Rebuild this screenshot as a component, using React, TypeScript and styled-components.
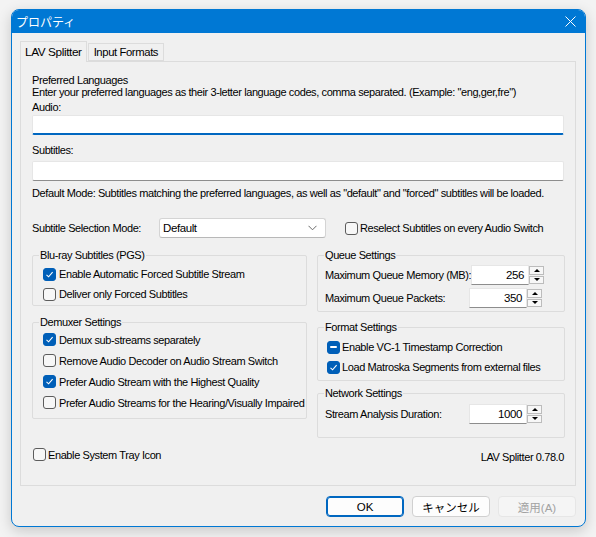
import React from "react";
import styled, { createGlobalStyle } from "styled-components";

const GlobalStyle = createGlobalStyle`
  html, body {
    margin: 0;
    padding: 0;
    background: #f3f3f3;
  }
  body {
    font-family: "Liberation Sans", "Noto Sans CJK JP", sans-serif;
    font-size: 11px;
    letter-spacing: -0.4px;
    color: #000;
  }
`;

const Page = styled.div`
  width: 596px;
  height: 537px;
  padding: 9px 0 0 11px;
  box-sizing: border-box;
`;

const Window = styled.div`
  width: 575px;
  height: 518px;
  box-sizing: border-box;
  border: 1px solid #0078d4;
  border-radius: 8px;
  overflow: hidden;
  background: #f0f0f0;
  box-shadow: 0 4px 14px rgba(0, 0, 0, 0.18);
  display: flex;
  flex-direction: column;
`;

const TitleBar = styled.div`
  height: 23px;
  background: #0078d4;
  color: #fff;
  display: flex;
  align-items: center;
  justify-content: space-between;
  padding: 0 9px 0 4px;
  font-size: 12px;
  letter-spacing: 0;
`;

const Body = styled.div`
  padding: 8px 9px 0 8px;
  display: flex;
  flex-direction: column;
`;

const TabStrip = styled.div`
  display: flex;
  align-items: flex-end;
  height: 20px;
  position: relative;
  z-index: 1;
`;

const Tab = styled.div<{ $active?: boolean }>`
  box-sizing: border-box;
  height: ${(p) => (p.$active ? "21px" : "18px")};
  padding: 0 ${(p) => (p.$active ? "4px" : "5px")};
  display: flex;
  align-items: center;
  border: 1px solid #dcdcdc;
  border-bottom: ${(p) => (p.$active ? "none" : "1px solid #dcdcdc")};
  background: #f0f0f0;
  margin-bottom: ${(p) => (p.$active ? "-1px" : "0")};
  margin-left: ${(p) => (p.$active ? "0" : "1px")};
  font-size: ${(p) => (p.$active ? "11.8px" : "11.3px")};
`;

const Panel = styled.div`
  box-sizing: border-box;
  height: 425px;
  border: 1px solid #dcdcdc;
  padding: 12px 11px 0;
  display: flex;
  flex-direction: column;
`;

const Line = styled.div<{ $mt?: number }>`
  line-height: 12px;
  margin-top: ${(p) => p.$mt ?? 0}px;
  white-space: nowrap;
`;

const TextInput = styled.div<{ $focused?: boolean; $mt?: number }>`
  height: 20px;
  box-sizing: border-box;
  background: #fff;
  border: 1px solid #e6e6e6;
  border-bottom: ${(p) => (p.$focused ? "2px solid #0067c0" : "1px solid #8d8d8d")};
  border-radius: 2px;
  margin-top: ${(p) => p.$mt ?? 0}px;
`;

const ModeRow = styled.div`
  display: flex;
  align-items: center;
  margin-top: 19px;
  height: 20px;
`;

const ModeLabel = styled.span`
  width: 127px;
`;

const Combo = styled.div`
  width: 167px;
  height: 20px;
  box-sizing: border-box;
  background: #fff;
  border: 1px solid #d4d4d4;
  border-bottom-color: #b8b8b8;
  border-radius: 3px;
  display: flex;
  align-items: center;
  justify-content: space-between;
  padding: 0 8px 0 3px;
  font-size: 11.5px;
`;

const Columns = styled.div`
  display: flex;
  gap: 10px;
  margin-top: 11px;
  align-items: flex-start;
`;

const Column = styled.div<{ $w: number }>`
  width: ${(p) => p.$w}px;
  display: flex;
  flex-direction: column;
`;

const Group = styled.fieldset<{ $mt?: number; $pt?: number; $pb?: number; $pl?: number }>`
  margin: ${(p) => p.$mt ?? 0}px 0 0;
  padding: ${(p) => p.$pt ?? 3}px 8px ${(p) => p.$pb ?? 2}px ${(p) => p.$pl ?? 10}px;
  border: 1px solid #dcdcdc;
  border-radius: 2px;
  min-width: 0;
  display: flex;
  flex-direction: column;
`;

const Legend = styled.legend<{ $pl?: number }>`
  padding: 0 1px;
  margin-left: ${(p) => 6 - (p.$pl ?? 10)}px;
  line-height: 12px;
`;

const CheckRow = styled.label<{ $h?: number; $gap?: number }>`
  display: flex;
  align-items: center;
  height: ${(p) => p.$h ?? 20}px;
  gap: ${(p) => p.$gap ?? 3}px;
  white-space: nowrap;
`;

const Box = styled.span<{ $state: "on" | "off" | "mixed" }>`
  width: 13px;
  height: 13px;
  box-sizing: border-box;
  border-radius: 3px;
  flex: none;
  display: flex;
  align-items: center;
  justify-content: center;
  border: 1px solid ${(p) => (p.$state === "off" ? "#5c5c5c" : "#005fb8")};
  background: ${(p) => (p.$state === "off" ? "#f7f7f7" : "#005fb8")};
`;

const Dash = styled.span`
  width: 7px;
  height: 2px;
  background: #fff;
  border-radius: 1px;
`;

const SpinRow = styled.div<{ $mt?: number }>`
  display: flex;
  align-items: center;
  justify-content: space-between;
  height: 20px;
  margin-top: ${(p) => p.$mt ?? 0}px;
  padding-right: 14px;
  white-space: nowrap;
`;

const SpinBox = styled.div`
  display: flex;
  height: 20px;
`;

const SpinEdit = styled.div`
  width: 58px;
  box-sizing: border-box;
  background: #fff;
  border: 1px solid #e6e6e6;
  border-bottom-color: #8d8d8d;
  text-align: right;
  padding-right: 4px;
  line-height: 18px;
  font-size: 11.5px;
`;

const SpinButtons = styled.div`
  width: 15px;
  display: flex;
  flex-direction: column;
  gap: 1px;
  padding: 1px 0;
  box-sizing: border-box;
`;

const SpinButton = styled.div`
  flex: 1;
  border: 1px solid #bcbcbc;
  background: #f7f7f7;
  display: flex;
  align-items: center;
  justify-content: center;
`;

const Arrow = styled.span<{ $up?: boolean }>`
  width: 0;
  height: 0;
  border-left: 3px solid transparent;
  border-right: 3px solid transparent;
  ${(p) => (p.$up ? "border-bottom: 3px solid #000;" : "border-top: 3px solid #000;")}
`;

const BottomRow = styled.div`
  display: flex;
  justify-content: space-between;
  align-items: center;
  margin-top: 8px;
  padding-left: 1px;
`;

const Version = styled.span`
  margin-top: 5px;
`;

const Buttons = styled.div`
  display: flex;
  justify-content: flex-end;
  gap: 8px;
  margin-top: 10px;
`;

const Button = styled.div<{ $kind?: "default" | "normal" | "disabled" }>`
  width: 78px;
  height: 21px;
  box-sizing: border-box;
  border-radius: 4px;
  display: flex;
  align-items: center;
  justify-content: center;
  font-size: 11.5px;
  letter-spacing: 0;
  background: ${(p) => (p.$kind === "disabled" ? "#f5f5f5" : "#fdfdfd")};
  color: ${(p) => (p.$kind === "disabled" ? "#a2a2a2" : "#000")};
  border: 1px solid
    ${(p) => (p.$kind === "default" ? "#0067c0" : p.$kind === "disabled" ? "#e6e6e6" : "#d0d0d0")};
  box-shadow: ${(p) => (p.$kind === "default" ? "inset 0 0 0 1px #0067c0" : "none")};
`;

const Check = ({ state }: { state: "on" | "off" | "mixed" }) => (
  <Box $state={state}>
    {state === "on" && (
      <svg width="9" height="9" viewBox="0 0 9 9">
        <path d="M1.5 4.8 L3.6 6.8 L7.6 2.2" fill="none" stroke="#fff" strokeWidth="1.1" />
      </svg>
    )}
    {state === "mixed" && <Dash />}
  </Box>
);

const Spin = ({ value }: { value: string }) => (
  <SpinBox>
    <SpinEdit>{value}</SpinEdit>
    <SpinButtons>
      <SpinButton>
        <Arrow $up />
      </SpinButton>
      <SpinButton>
        <Arrow />
      </SpinButton>
    </SpinButtons>
  </SpinBox>
);

export default function App() {
  return (
    <>
      <GlobalStyle />
      <Page>
        <Window>
          <TitleBar>
            <span>プロパティ</span>
            <svg width="11" height="11" viewBox="0 0 11 11">
              <path d="M0.5 0.5 L10.5 10.5 M10.5 0.5 L0.5 10.5" stroke="#fff" strokeWidth="1" />
            </svg>
          </TitleBar>
          <Body>
            <TabStrip>
              <Tab $active>LAV Splitter</Tab>
              <Tab>Input Formats</Tab>
            </TabStrip>
            <Panel>
              <Line>Preferred Languages</Line>
              <Line>
                Enter your preferred languages as their 3-letter language codes, comma separated.
                (Example: "eng,ger,fre")
              </Line>
              <Line $mt={3}>Audio:</Line>
              <TextInput $focused $mt={2} />
              <Line $mt={9}>Subtitles:</Line>
              <TextInput $mt={5} />
              <Line $mt={6}>
                Default Mode: Subtitles matching the preferred languages, as well as "default" and
                "forced" subtitles will be loaded.
              </Line>
              <ModeRow>
                <ModeLabel>Subtitle Selection Mode:</ModeLabel>
                <Combo>
                  <span>Default</span>
                  <svg width="9" height="6" viewBox="0 0 9 6">
                    <path d="M0.5 0.8 L4.5 4.8 L8.5 0.8" fill="none" stroke="#6b6b6b" strokeWidth="1" />
                  </svg>
                </Combo>
                <CheckRow $gap={2} style={{ marginLeft: 19 }}>
                  <Check state="off" />
                  Reselect Subtitles on every Audio Switch
                </CheckRow>
              </ModeRow>
              <Columns>
                <Column $w={275}>
                  <Group $pt={3} $pb={1}>
                    <Legend>Blu-ray Subtitles (PGS)</Legend>
                    <CheckRow>
                      <Check state="on" />
                      Enable Automatic Forced Subtitle Stream
                    </CheckRow>
                    <CheckRow>
                      <Check state="off" />
                      Deliver only Forced Subtitles
                    </CheckRow>
                  </Group>
                  <Group $mt={10} $pt={1} $pb={5}>
                    <Legend>Demuxer Settings</Legend>
                    <CheckRow $h={21}>
                      <Check state="on" />
                      Demux sub-streams separately
                    </CheckRow>
                    <CheckRow $h={21}>
                      <Check state="off" />
                      Remove Audio Decoder on Audio Stream Switch
                    </CheckRow>
                    <CheckRow $h={21}>
                      <Check state="on" />
                      Prefer Audio Stream with the Highest Quality
                    </CheckRow>
                    <CheckRow $h={21}>
                      <Check state="off" />
                      Prefer Audio Streams for the Hearing/Visually Impaired
                    </CheckRow>
                  </Group>
                </Column>
                <Column $w={248}>
                  <Group $pt={4} $pb={3} $pl={7}>
                    <Legend $pl={7}>Queue Settings</Legend>
                    <SpinRow>
                      <span>Maximum Queue Memory (MB):</span>
                      <Spin value="256" />
                    </SpinRow>
                    <SpinRow $mt={3}>
                      <span>Maximum Queue Packets:</span>
                      <Spin value="350" />
                    </SpinRow>
                  </Group>
                  <Group $mt={9} $pt={4} $pb={3} $pl={9}>
                    <Legend $pl={9}>Format Settings</Legend>
                    <CheckRow $gap={2}>
                      <Check state="mixed" />
                      Enable VC-1 Timestamp Correction
                    </CheckRow>
                    <CheckRow $gap={2}>
                      <Check state="on" />
                      Load Matroska Segments from external files
                    </CheckRow>
                  </Group>
                  <Group $mt={6} $pt={5} $pb={13} $pl={7}>
                    <Legend $pl={7}>Network Settings</Legend>
                    <SpinRow>
                      <span>Stream Analysis Duration:</span>
                      <Spin value="1000" />
                    </SpinRow>
                  </Group>
                </Column>
              </Columns>
              <BottomRow>
                <CheckRow $gap={2} $h={16}>
                  <Check state="off" />
                  Enable System Tray Icon
                </CheckRow>
                <Version>LAV Splitter 0.78.0</Version>
              </BottomRow>
            </Panel>
            <Buttons>
              <Button $kind="default">OK</Button>
              <Button>キャンセル</Button>
              <Button $kind="disabled">適用(A)</Button>
            </Buttons>
          </Body>
        </Window>
      </Page>
    </>
  );
}
